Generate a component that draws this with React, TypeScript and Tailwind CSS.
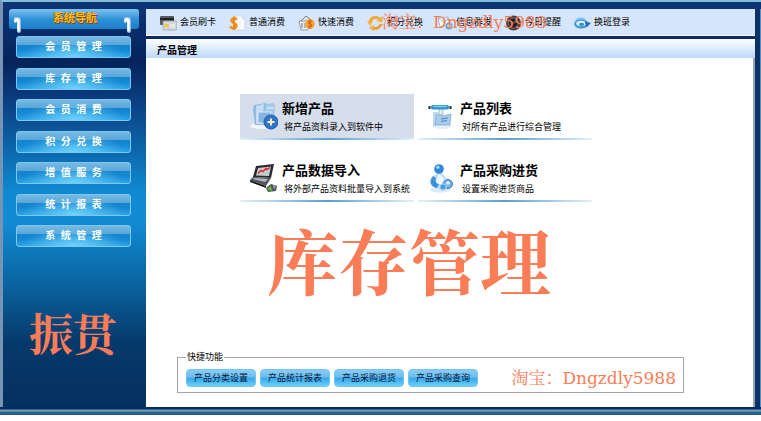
import React from "react";

const sans = "font-['Liberation_Sans','Noto_Sans_CJK_SC',sans-serif]";
const serif = "font-['DejaVu_Serif','Noto_Serif_CJK_SC','Noto_Sans_CJK_SC',serif]";

const navItems = [
  "会  员  管  理",
  "库  存  管  理",
  "会  员  消  费",
  "积  分  兑  换",
  "增  值  服  务",
  "统  计  报  表",
  "系  统  管  理",
];

const shortcuts = ["产品分类设置", "产品统计报表", "产品采购退货", "产品采购查询"];

const CardIcon = () => (
  <svg viewBox="0 0 17 16" className="h-4 w-[17px] shrink-0">
    <rect x="0" y="1" width="14" height="9" rx="1" fill="#555b60" />
    <rect x="0" y="3" width="14" height="2" fill="#202326" />
    <rect x="3" y="6" width="14" height="9" rx="1" fill="#d5d8d6" stroke="#8b9090" strokeWidth=".6" />
    <rect x="4.500" y="9" width="4" height="3" fill="#efc92d" />
    <path d="M10 10h5M10 12h5" stroke="#fff" strokeWidth=".8" />
  </svg>
);

const DollarIcon = () => (
  <svg viewBox="0 0 17 16" className="h-4 w-[17px] shrink-0">
    <path d="M6 1h7l3 3v11H6z" fill="#f7f8fa" stroke="#c3c9d3" strokeWidth=".6" />
    <path d="M13 1v3h3" fill="#d9dde4" />
    <path d="M8 4.500C6 2.500 2 3.500 2.500 6S8 8 7.500 11 3 14 1 11.500M5 1.500v13.500" fill="none" stroke="#f08a14" strokeWidth="2.200" />
  </svg>
);

const BasketIcon = () => (
  <svg viewBox="0 0 17 16" className="h-4 w-[17px] shrink-0">
    <path d="M1 6h10l-1 9H3z" fill="#e9ebef" stroke="#858c98" strokeWidth=".8" />
    <path d="M3 6l5-5 5 4M4 8v5M7 8v5" fill="none" stroke="#777f8c" />
    <circle cx="12" cy="9" r="4.800" fill="#f9a72e" />
    <path d="M14 7c-1-1.500-4-1-3.500.8s3.500.8 3.200 2.600-3 1.600-4 .2M12 4v10" fill="none" stroke="#e0680f" strokeWidth="1.400" />
  </svg>
);

const CycleIcon = () => (
  <svg viewBox="0 0 17 16" className="h-4 w-[17px] shrink-0">
    <path d="M3 7C4 2.500 9 1 12.500 4" fill="none" stroke="#f5a42c" strokeWidth="2.800" />
    <path d="M14 9c-1 4-5 5.500-9 3.500" fill="none" stroke="#f0962a" strokeWidth="2.800" />
    <path d="M15.500 1v6.500L9.500 6zM6.500 9.500L7 16l-5-3zM0 6l6 0-3 5z" fill="#f7b040" />
  </svg>
);

const MailIcon = () => (
  <svg viewBox="0 0 17 16" className="h-4 w-[17px] shrink-0">
    <path d="M2 3l10-1 2 8-10 2z" fill="#f3f8fc" stroke="#8ba9bf" strokeWidth=".7" />
    <path d="M2 3l7 5 3-6" fill="none" stroke="#8ba9bf" strokeWidth=".7" />
    <circle cx="13" cy="11" r="3.500" fill="#5caad6" />
    <path d="M11 11h4M13 9v4" stroke="#fff" />
  </svg>
);

const ClockIcon = () => (
  <svg viewBox="0 0 17 16" className="h-4 w-[17px] shrink-0">
    <circle cx="8.500" cy="8" r="7.500" fill="#4a3f3c" />
    <circle cx="8.500" cy="8" r="5" fill="#211e20" stroke="#806f68" />
    <path d="M5.500 6l3 2L11 6" fill="none" stroke="#b9a8a0" strokeWidth=".8" />
  </svg>
);

const SwapIcon = () => (
  <svg viewBox="0 0 19 16" className="h-4 w-[17px] shrink-0">
    <ellipse cx="8" cy="9" rx="7.800" ry="5.200" fill="#3d96d4" />
    <ellipse cx="8" cy="8.500" rx="5.500" ry="3" fill="#d7f0fb" />
    <ellipse cx="8.500" cy="9.500" rx="3" ry="1.800" fill="#3a8ecb" />
    <path d="M12 6l7 2-5 5z" fill="#1f72b8" />
    <path d="M2 5c3-3 8-3 11 0" fill="none" stroke="#7fc3e8" strokeWidth="1.800" />
  </svg>
);

const AddProductIcon = () => (
  <svg viewBox="0 0 28 30" className="h-[30px] w-7">
    <ellipse cx="12" cy="25" rx="12" ry="3" fill="#f0f5fb" />
    <path d="M4 4l12-2 2 3-1 19H5L3 8z" fill="#91bae3" />
    <path d="M6 5l8-2-2 20H6z" fill="#c2dcf3" />
    <path d="M16 3l8-1 1 4-1 14h-9V7z" fill="#a3c9ea" />
    <path d="M17 7h7" stroke="#f1f7fd" />
    <path d="M8 11h13l-1 11H8z" fill="#85b4e2" stroke="#d9e9f8" />
    <circle cx="21" cy="21" r="7" fill="#2f74cf" stroke="#1d58ab" />
    <path d="M21 17.500v7M17.500 21h7" stroke="#fbeeb0" strokeWidth="2" />
  </svg>
);

const ProductListIcon = () => (
  <svg viewBox="0 0 28 30" className="h-[30px] w-7">
    <ellipse cx="14" cy="25" rx="10" ry="3" fill="#e6eef6" />
    <path d="M5 11h5v14H5z" fill="#bcd8f0" />
    <path d="M8 14l4-1 2 2 9-2-1 11H7z" fill="#a7cbea" stroke="#7fabd6" strokeWidth=".7" />
    <path d="M13 18l7-1M13 20.500l6-1" stroke="#4d87c4" />
    <path d="M11 8v6h4V8" fill="#e3eaf1" stroke="#879cb0" strokeWidth=".6" />
    <rect x="3" y="4" width="18" height="4.500" rx="2" fill="#2796cd" />
    <rect x="5" y="4.800" width="14" height="1.500" rx=".7" fill="#84d0ee" />
    <path d="M1.500 5v3M22.500 5v3" stroke="#1c2f45" strokeWidth="2" />
  </svg>
);

const ImportIcon = () => (
  <svg viewBox="0 0 28 30" className="h-[30px] w-7">
    <path d="M6 3L24 1l-3 14L3 14z" fill="#272a2e" />
    <path d="M8 5l13-1.500-2 9.500-13-.5z" fill="#c4ccd3" />
    <path d="M8 10.500l3-3 2 1 3-3 1 1 3-2" fill="none" stroke="#df2c25" strokeWidth="1.500" />
    <path d="M3 14l18 1-5 8L0 17z" fill="#53575c" />
    <path d="M4 15l14 1-3 3-12-3z" fill="#b4b9bd" />
    <path d="M0 17l16 6v2L0 19z" fill="#191b1e" />
    <path d="M16 25l5-4 6 2-1 5-8 1z" fill="#4f555a" />
    <path d="M17 26l4-3 1 5z" fill="#62c738" />
    <path d="M23 22l3 1-2 4z" fill="#9aa1a5" />
  </svg>
);

const PurchaseIcon = () => (
  <svg viewBox="0 0 28 30" className="h-[30px] w-7">
    <ellipse cx="12" cy="27" rx="10" ry="2.500" fill="#d8e9f8" />
    <path d="M3 21c0-7 4-11 8-11s9 4 8 10c-1 6-15 7-16 1z" fill="#c3dff8" />
    <path d="M5 13c-5 5-2 11 4 12l2-4c-3 0-4-3-3-6z" fill="#3b91dc" />
    <path d="M11 11l5 5-3 6-5-3z" fill="#f0f8ff" />
    <circle cx="11" cy="6" r="4.800" fill="#2f86d8" />
    <circle cx="9.800" cy="4.300" r="1.800" fill="#a3d3f7" />
    <circle cx="20" cy="21" r="4.500" fill="#72b4e9" stroke="#3379bd" />
    <circle cx="20" cy="20" r="1.800" fill="#e8f5ff" />
    <circle cx="15" cy="24" r="3.200" fill="#4d9ddd" stroke="#b5d9f6" />
  </svg>
);

const Hook = () => (
  <svg viewBox="0 0 7 16" className="h-4 w-[7px]">
    <path d="M1 4C0 0 5 0 5 3.500V14" fill="none" stroke="#8fb9dc" strokeWidth="4" strokeLinecap="round" />
    <path d="M1.500 4C1 1.500 4.500 1.500 4.500 4V13.500" fill="none" stroke="#fff" strokeWidth="2.500" strokeLinecap="round" />
  </svg>
);

const tools = [
  { label: "会员刷卡", icon: <CardIcon /> },
  { label: "普通消费", icon: <DollarIcon /> },
  { label: "快速消费", icon: <BasketIcon /> },
  { label: "积分兑换", icon: <CycleIcon /> },
  { label: "信息群发", icon: <MailIcon /> },
  { label: "今日提醒", icon: <ClockIcon /> },
  { label: "换班登录", icon: <SwapIcon /> },
];

const features = [
  { title: "新增产品", text: "将产品资料录入到软件中", icon: <AddProductIcon />, active: true },
  { title: "产品列表", text: "对所有产品进行综合管理", icon: <ProductListIcon />, active: false },
  { title: "产品数据导入", text: "将外部产品资料批量导入到系统", icon: <ImportIcon />, active: false },
  { title: "产品采购进货", text: "设置采购进货商品", icon: <PurchaseIcon />, active: false },
];

const Sidebar: React.FC = () => (
  <aside className="flex w-[143px] shrink-0 flex-col">
    <div className="relative mr-[7px] ml-[6px] h-5 rounded-[3px] bg-linear-to-b from-[#7cc4ee] via-[#2d92d8] to-[#1a7dc8] text-center">
      <h2 className="pl-[2px] text-[11px] leading-[18px] font-bold text-[#f3c01c] [text-shadow:1px_1px_0_#8a3c10,-1px_0_0_#b0641c]">
        系统导航
      </h2>
      <span className="absolute top-2 left-[5px]"><Hook /></span>
      <span className="absolute top-2 right-2"><Hook /></span>
    </div>
    <nav className="mt-[7px] mr-[15px] ml-[13px] flex h-[211px] flex-col justify-between">
      {navItems.map((item) => (
        <button
          key={item}
          className="h-[22px] rounded-[3px] border border-[#7cc8f4] bg-[radial-gradient(ellipse_at_bottom,#6fd3fb_0%,#6fd3fb00_65%),linear-gradient(#78b9e3_0%,#58a6da_38%,#1683cd_42%,#1488d4_65%,#2ea4e6_100%)] text-[10px] leading-5 font-bold whitespace-pre text-white"
        >
          {item}
        </button>
      ))}
    </nav>
    <p className={`mt-[59px] pl-[26px] text-[44px] leading-[60px] font-bold text-[#fb7d57] ${serif}`}>
      振贯
    </p>
  </aside>
);

const Toolbar: React.FC = () => (
  <div className="relative flex h-[27px] items-center border-b border-white bg-[#d5e5fb] pt-[2px] pl-[14px]">
    {tools.map((tool) => (
      <button key={tool.label} className="flex w-[69px] items-center gap-[3px] text-[9px] whitespace-nowrap text-black">
        {tool.icon}
        {tool.label}
      </button>
    ))}
    <span className={`pointer-events-none absolute top-0 left-[236px] text-[17px] leading-[26px] whitespace-nowrap text-[#fb7d57] ${serif}`}>
      淘宝：Dngzdly5988
    </span>
  </div>
);

const App: React.FC = () => {
  return (
    <div className={`bg-white ${sans}`}>
      <div className="flex border-t-2 border-l-3 border-t-[#86bddb] border-l-[#7794b5] bg-[linear-gradient(#0d3576_0%,#06245c_15%,#0a3a7c_23%,#0f8ad0_47%,#118cd4_54%,#0a639f_70%,#06396b_84%,#04305f_100%)] pt-[7px]">
        <Sidebar />
        <main className="min-w-0 flex-1">
          <Toolbar />
          <div className="mt-[3px] h-[19px] bg-linear-to-b from-white to-[#bcd8fa] pl-[11px]">
            <h1 className="text-[10px] leading-6 font-bold text-black">产品管理</h1>
          </div>
          <div className="border-r-2 border-[#98a4b2] bg-white pt-9 pb-[14px]">
            <div className="flex flex-wrap gap-x-1 gap-y-4 pr-[140px] pl-[94px]">
              {features.map((f) => (
                <a
                  key={f.title}
                  href="#"
                  className={`flex h-[46px] w-[174px] flex-col text-black ${f.active ? "bg-[#d6deeb]" : ""}`}
                >
                  <span className="flex h-11 gap-1 pl-[10px]">
                    <span className="w-7 shrink-0 pt-[7px]">{f.icon}</span>
                    <span className="pt-[6px] whitespace-nowrap">
                      <strong className="block text-[13px] leading-[18px]">{f.title}</strong>
                      <span className="block pl-[2px] text-[9px] leading-[18px]">{f.text}</span>
                    </span>
                  </span>
                  <span className="h-[2px] bg-linear-to-r from-[#e3f0f9] via-[#5a9fce] to-[#e3f0f9]" />
                </a>
              ))}
            </div>
            <p className={`mt-[26px] pl-[121px] text-[71px] leading-[72px] font-bold whitespace-nowrap text-[#fb7d57] ${serif}`}>
              库存管理
            </p>
            <fieldset className="mt-[51px] mr-[69px] ml-[31px] flex h-[42px] items-center border border-[#a5a5a5] pl-2">
              <legend className="px-px text-[9px] leading-3 text-black">快捷功能</legend>
              <div className="flex w-full items-center justify-between pr-[7px]">
                <div className="flex gap-1">
                  {shortcuts.map((s) => (
                    <button
                      key={s}
                      className="h-[18px] w-[70px] rounded-[4px] border border-[#6cc8f3] bg-[linear-gradient(#8accf3_0%,#6bbcee_45%,#38a6e8_50%,#67d0fa_100%)] text-[9px] leading-4 whitespace-nowrap text-[#04183c]"
                    >
                      {s}
                    </button>
                  ))}
                </div>
                <span className={`text-[17px] leading-5 whitespace-nowrap text-[#fb7d57] ${serif}`}>
                  淘宝：Dngzdly5988
                </span>
              </div>
            </fieldset>
          </div>
        </main>
        <div className="w-[6px] shrink-0 border-r border-[#5f8db8] bg-[#0a3268]" />
      </div>
      <div className="h-2 bg-[linear-gradient(#032d60_0px,#032d60_2px,#6c97b3_3px,#7ba3bb_4px,#2f6590_5px,#245a88_8px)]" />
    </div>
  );
};

export default App;
